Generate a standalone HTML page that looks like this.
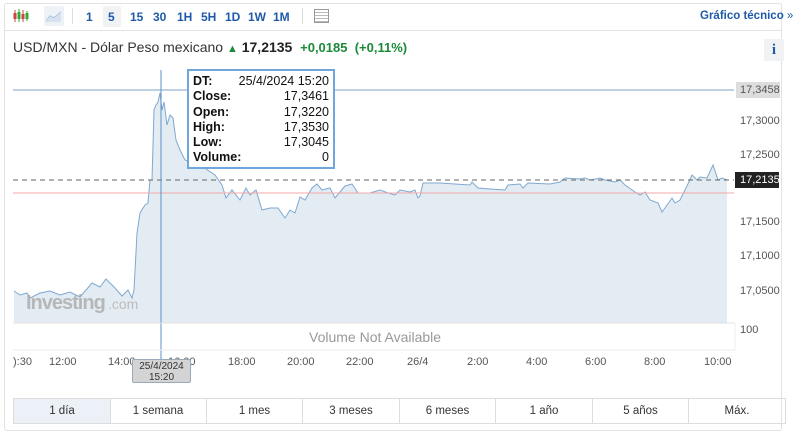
<!DOCTYPE html><html><head><style>
body{margin:0;width:800px;height:437px;background:#fff;font-family:"Liberation Sans",sans-serif;position:relative;overflow:hidden}
.a{position:absolute}
.card{left:4px;top:3px;width:776px;height:426px;border:1px solid #e2e2e2;border-radius:3px}
.tb{font-size:12px;font-weight:bold;color:#1f5aa8;top:10px}
.ax{font-size:11px;color:#555}
.btn{top:398px;height:24px;border:1px solid #ddd;border-left:none;font-size:11.5px;color:#333;text-align:center;line-height:24px}
</style></head><body>
<div class="a card"></div>
<div class="a" style="left:4px;top:30px;width:777px;border-top:1px solid #e2e2e2"></div>
<svg class="a" style="left:13px;top:9px" width="16" height="14"><g stroke="#c44" stroke-width="1"><line x1="2" y1="1" x2="2" y2="13"/><line x1="10" y1="1" x2="10" y2="13"/></g><g stroke="#3a3" ><line x1="6" y1="0" x2="6" y2="13"/><line x1="14" y1="2" x2="14" y2="12"/></g><rect x="0.5" y="4" width="3" height="6" fill="#c44"/><rect x="4.5" y="3" width="3" height="7" fill="#3a3"/><rect x="8.5" y="5" width="3" height="5" fill="#c44"/><rect x="12.5" y="4" width="3" height="6" fill="#3a3"/></svg>
<div class="a" style="left:44px;top:6px;width:20px;height:20px;background:#eef1f5;border-radius:2px"></div>
<svg class="a" style="left:46px;top:10px" width="16" height="12"><path d="M0 11 L4 6 L8 8 L15 2" stroke="#8aa8cc" fill="none"/><path d="M0 11 L4 6 L8 8 L15 2 L15 12 L0 12Z" fill="#d6e2f0"/></svg>
<div class="a" style="left:72px;top:8px;height:16px;border-left:1px solid #ddd"></div>
<div class="a" style="left:103px;top:6px;width:18px;height:21px;background:#f1f2f4;border-radius:2px"></div>
<span class="a tb" style="left:86px">1</span><span class="a tb" style="left:108px">5</span><span class="a tb" style="left:130px">15</span><span class="a tb" style="left:153px">30</span><span class="a tb" style="left:177px">1H</span><span class="a tb" style="left:201px">5H</span><span class="a tb" style="left:225px">1D</span><span class="a tb" style="left:248px">1W</span><span class="a tb" style="left:273px">1M</span>
<div class="a" style="left:302px;top:8px;height:16px;border-left:1px solid #ddd"></div>
<div class="a" style="left:314px;top:9px;width:13px;height:12px;border:1px solid #999;background:repeating-linear-gradient(#fff 0 2px,#bbb 2px 3px)"></div>
<span class="a tb" style="left:700px;font-size:11.5px">Gráfico técnico <span style="font-weight:normal">»</span></span>
<div class="a" style="left:13px;top:39px;font-size:14px;color:#333">USD/MXN - Dólar Peso mexicano <span style="color:#1a8a3a;font-size:11px">&#9650;</span> <b style="color:#222">17,2135</b> &nbsp;<b style="color:#1a8a3a;font-size:13px">+0,0185 &nbsp;(+0,11%)</b></div>
<div class="a" style="left:764px;top:39px;width:20px;height:22px;background:#f1f2f4;font:bold 15px 'Liberation Serif',serif;color:#1f5aa8;text-align:center;line-height:22px">i</div>
<svg class="a" style="left:0;top:0" width="800" height="437">
<path d="M14,291 L20,295 27,293 30,298 40,293 50,291 60,295 70,292 80,297 92,283 100,287 106,279 115,288 122,296 128,290 132,298 134,290 137,233 140,213 145,205 148,203 150,180 152,180 154,110 156,105 158,102 160,93 162,110 164,102 167,125 170,115 173,118 176,140 180,150 185,160 200,165 215,175 222,185 226,198 232,190 240,200 246,188 250,195 256,190 262,210 270,208 278,208 285,218 290,210 295,213 300,197 305,200 312,188 317,184 322,190 330,188 335,198 345,186 352,184 358,193 370,193 380,190 388,193 395,195 400,190 410,192 415,190 418,198 420,196 423,183 440,183 470,185 472,182 478,188 490,189 505,190 508,185 520,184 523,188 528,183 550,184 560,182 565,178 580,179 585,178 590,180 600,178 605,180 615,182 620,180 625,185 635,192 640,195 645,192 650,200 658,203 662,212 665,208 672,198 675,203 680,200 687,186 692,175 697,180 700,177 707,178 713,165 718,180 722,178 727,180 L727,323 L14,323Z" fill="#e4ecf3"/>
<path d="M14,291 L20,295 27,293 30,298 40,293 50,291 60,295 70,292 80,297 92,283 100,287 106,279 115,288 122,296 128,290 132,298 134,290 137,233 140,213 145,205 148,203 150,180 152,180 154,110 156,105 158,102 160,93 162,110 164,102 167,125 170,115 173,118 176,140 180,150 185,160 200,165 215,175 222,185 226,198 232,190 240,200 246,188 250,195 256,190 262,210 270,208 278,208 285,218 290,210 295,213 300,197 305,200 312,188 317,184 322,190 330,188 335,198 345,186 352,184 358,193 370,193 380,190 388,193 395,195 400,190 410,192 415,190 418,198 420,196 423,183 440,183 470,185 472,182 478,188 490,189 505,190 508,185 520,184 523,188 528,183 550,184 560,182 565,178 580,179 585,178 590,180 600,178 605,180 615,182 620,180 625,185 635,192 640,195 645,192 650,200 658,203 662,212 665,208 672,198 675,203 680,200 687,186 692,175 697,180 700,177 707,178 713,165 718,180 722,178 727,180" fill="none" stroke="#7fa8d0" stroke-width="1"/>
<line x1="13" y1="90" x2="734" y2="90" stroke="#7fa0c4"/>
<line x1="13" y1="193" x2="734" y2="193" stroke="#f2a8a8"/>
<line x1="13" y1="180" x2="734" y2="180" stroke="#666" stroke-dasharray="5,4"/>
<line x1="161" y1="70" x2="161" y2="372" stroke="#5b8fc8"/>
<line x1="13" y1="323" x2="735" y2="323" stroke="#e0e0e0"/>
<line x1="13" y1="350" x2="735" y2="350" stroke="#eee"/>
<line x1="735" y1="323" x2="735" y2="350" stroke="#eee"/>
<text x="26" y="309" font-family="Liberation Sans" font-weight="bold" font-size="20" fill="#aaa" opacity="0.8" letter-spacing="-1">Investing</text><text x="108" y="309" font-family="Liberation Sans" font-size="14" fill="#bbb">.com</text>
</svg>
<div class="a" style="left:187px;top:69px;width:148px;height:100px;background:#fff;border:2px solid #6fa6dc;font-size:12.5px;line-height:15.3px;padding:3px 4px;box-sizing:border-box;color:#111">
<div><b>DT:</b><span style="float:right">25/4/2024 15:20</span></div>
<div><b>Close:</b><span style="float:right">17,3461</span></div>
<div><b>Open:</b><span style="float:right">17,3220</span></div>
<div><b>High:</b><span style="float:right">17,3530</span></div>
<div><b>Low:</b><span style="float:right">17,3045</span></div>
<div><b>Volume:</b><span style="float:right">0</span></div></div>
<div class="a" style="left:736px;top:82px;width:44px;height:16px;background:#ddd"></div>
<span class="a ax" style="left:740px;top:84px">17,3458</span>
<span class="a ax" style="left:740px;top:115px">17,3000</span>
<span class="a ax" style="left:740px;top:149px">17,2500</span>
<div class="a" style="left:735px;top:172px;width:44px;height:16px;background:#222"></div>
<span class="a ax" style="left:740px;top:174px;color:#fff">17,2135</span>
<span class="a ax" style="left:740px;top:216px">17,1500</span>
<span class="a ax" style="left:740px;top:250px">17,1000</span>
<span class="a ax" style="left:740px;top:285px">17,0500</span>
<span class="a ax" style="left:740px;top:324px">100</span>
<div class="a" style="left:309px;top:329px;font-size:14px;color:#999">Volume Not Available</div>
<span class="a ax" style="left:13px;top:356px">):30</span><span class="a ax" style="left:49px;top:356px">12:00</span><span class="a ax" style="left:108px;top:356px">14:00</span><span class="a ax" style="left:168px;top:356px">16:00</span><span class="a ax" style="left:228px;top:356px">18:00</span><span class="a ax" style="left:287px;top:356px">20:00</span><span class="a ax" style="left:346px;top:356px">22:00</span><span class="a ax" style="left:407px;top:356px">26/4</span><span class="a ax" style="left:467px;top:356px">2:00</span><span class="a ax" style="left:526px;top:356px">4:00</span><span class="a ax" style="left:585px;top:356px">6:00</span><span class="a ax" style="left:644px;top:356px">8:00</span><span class="a ax" style="left:704px;top:356px">10:00</span>
<div class="a" style="left:132px;top:359px;width:59px;height:24px;background:#d4d4d4;border:1px solid #9ab;border-radius:2px;font-size:10px;text-align:center;line-height:11px;padding-top:1px;box-sizing:border-box;color:#333">25/4/2024<br>15:20</div>
<div class="a btn" style="left:13px;width:96px;border-left:1px solid #ddd;background:#ecf1f7">1 día</div>
<div class="a btn" style="left:110px;width:96px">1 semana</div>
<div class="a btn" style="left:207px;width:95px">1 mes</div>
<div class="a btn" style="left:303px;width:96px">3 meses</div>
<div class="a btn" style="left:400px;width:95px">6 meses</div>
<div class="a btn" style="left:496px;width:96px">1 año</div>
<div class="a btn" style="left:593px;width:95px">5 años</div>
<div class="a btn" style="left:689px;width:96px">Máx.</div>
</body></html>
